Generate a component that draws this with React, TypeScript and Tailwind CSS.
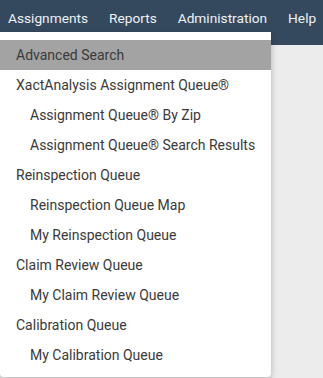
import React from 'react';

const navItems = ['Assignments', 'Reports', 'Administration', 'Help'];

const menuItems: { label: string; indent?: boolean; active?: boolean }[] = [
  { label: 'Advanced Search', active: true },
  { label: 'XactAnalysis Assignment Queue®' },
  { label: 'Assignment Queue® By Zip', indent: true },
  { label: 'Assignment Queue® Search Results', indent: true },
  { label: 'Reinspection Queue' },
  { label: 'Reinspection Queue Map', indent: true },
  { label: 'My Reinspection Queue', indent: true },
  { label: 'Claim Review Queue' },
  { label: 'My Claim Review Queue', indent: true },
  { label: 'Calibration Queue' },
  { label: 'My Calibration Queue', indent: true },
];

export default function App() {
  return (
    <div className="relative w-[323px] h-[378px] overflow-hidden bg-[#ececec] font-['Roboto',sans-serif]">
      {/* Top nav */}
      <div className="h-[45px] bg-[#35495e] flex items-start pt-[8px] pl-[8px] gap-[21px]">
        {navItems.map((item) => (
          <span key={item} className="text-[13.7px] leading-[20px] text-[#eef2f6] whitespace-nowrap">
            {item}
          </span>
        ))}
      </div>

      {/* Assignments dropdown */}
      <div className="absolute left-0 top-[32px] w-[271px] bg-white rounded-b-[4px] shadow-[0_2px_6px_rgba(0,0,0,0.25)] pt-[8px] pb-[7px]">
        {menuItems.map((item) => (
          <div
            key={item.label}
            className={`h-[30px] flex items-center text-[14px] text-[#3a3a3a] whitespace-nowrap ${
              item.indent ? 'pl-[30px]' : 'pl-[16px]'
            } ${item.active ? 'bg-[#a3a3a3]' : ''}`}
          >
            {item.label}
          </div>
        ))}
      </div>
    </div>
  );
}
